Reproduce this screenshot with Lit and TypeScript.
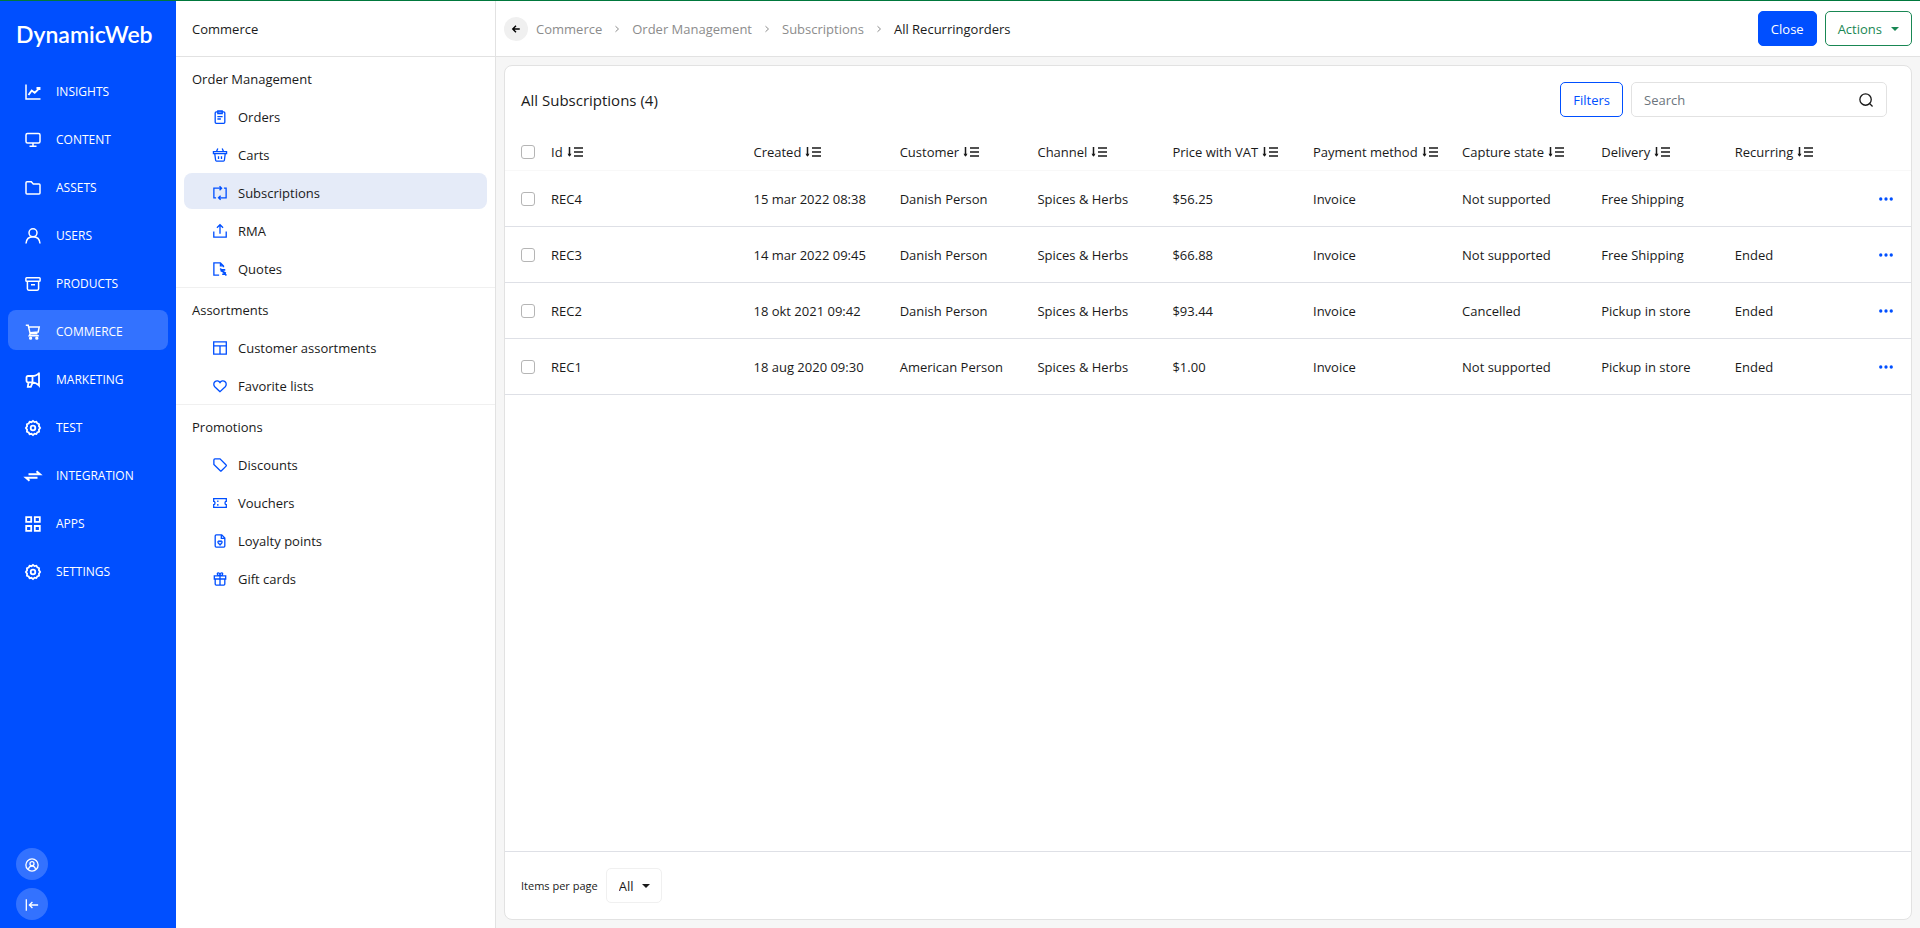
import { LitElement, html, css, svg } from "lit";
import { customElement, state } from "lit/decorators.js";
import { classMap } from "lit/directives/class-map.js";

const gear = svg`<circle cx="8" cy="8" r="2.3" stroke-width="1.8"/><path stroke-width="1.8" d="M8 .9l1.5 1.2 1.9-.4.9 1.7 1.8.8-.2 1.9L15.1 8l-1.2 1.7.2 1.9-1.8.8-.9 1.7-1.9-.4L8 15.1l-1.5-1.3-1.9.4-.9-1.7-1.8-.8.2-1.9L.9 8l1.2-1.8-.2-1.9 1.8-.8.9-1.7 1.9.4z"/>`;

const icons: Record<string, unknown> = {
  chart: svg`<path d="M1 .5V15h14.5"/><path stroke-width="1.9" d="M3.5 11l3.2-4.5 3 2.3L14.5 4M11.5 4h3v2"/>`,
  monitor: svg`<rect x="1" y="1.5" width="14" height="9.5" rx="1.5"/><path d="M8 11v3M4.5 14.2h7"/>`,
  folder: svg`<path d="M1 13V2.8c0-.6.4-1 1-1h4.3l2 2.200H14c.6 0 1 .4 1 1V13c0 .6-.4 1-1 1H2c-.6 0-1-.4-1-1z"/>`,
  user: svg`<circle cx="8" cy="4.8" r="4"/><path d="M1 15.5c.3-4 3-6.700 7-6.700s6.700 2.700 7 6.700"/>`,
  archive: svg`<rect x=".9" y="1.7" width="14.2" height="3.6" rx=".8"/><path d="M2.400 5.300v7.500c0 .8.500 1.400 1.300 1.400h8.600c.8 0 1.300-.6 1.300-1.400V5.300M6 8.700h4"/>`,
  cart: svg`<path d="M.8 1.300h2.400l2 8.500h7.300M3.700 3h10.500l-1 5-8 .7M5.200 9.800l-1 2h9.600"/><circle cx="5.6" cy="14.2" r=".9"/><circle cx="11.8" cy="14.2" r=".9"/>`,
  megaphone: svg`<path stroke-width="1.8" d="M14 .5v13c-2-2.300-4.500-3.200-7-3.200H3C1.800 10.300 1.500 9.500 1.500 8.800V5.500C1.500 4.300 2 4 3 4h4c3 0 5.500-1 7-3M7.500 4v6M3.500 10.300L2.800 14.800h3l1.700-4"/>`,
  gear,
  swap: svg`<path stroke-width="2" d="M3.500 6.300H15L11.500 3.200M12.500 9.700H1L4.500 12.800"/>`,
  grid: svg`<path stroke-width="1.8" d="M1.200 1.200h5v4.600h-5zM9.800 1.200h5v4.600h-5zM1.200 10h5v4.800h-5zM9.800 10h5v4.800h-5z"/>`,
  clipboard: svg`<rect x="2.5" y="2.2" width="11" height="13" rx="1.3"/><path d="M5.500 1h5v3h-5zM5 7.500h6M5 10.300h4"/>`,
  basket: svg`<path d="M.5 4.200h15v2.300H.5zM2 6.500l1 7.500c.1.700.5 1 1 1h8c.5 0 .9-.3 1-1l1-7.500M5.500.5L4 4M10.500.5L12 4M6.300 9.500v3M9.700 9.500v3"/>`,
  repeat: svg`<path d="M3.500 13.500H1V2.500h8.500M12.500 2.500H15v11H6.500M7.500.3L9.800 2.500 7.500 4.800M8.700 11.200L6.300 13.500l2.400 2.300"/>`,
  share: svg`<path d="M.9 8.500v6.600h14.200V8.500M8 11V1M4.500 4.300L8 .9l3.500 3.400"/>`,
  quote: svg`<path d="M7 15.100H1V1h7.500L12 4.500V6M8.500 1v3.500H12"/><path stroke-width="1.8" d="M14 9h-3.500l-1 1 4.500 2.500-.5 1.500H10.500M8.300 7.500l7 8"/>`,
  layout: svg`<path d="M.8 1h14.400v14H.8zM.8 5.500h14.400M8 5.500V15"/>`,
  heart: svg`<path d="M8 14.500L2 8.800C.4 7 .6 4.300 2.300 3 4 1.600 6.500 1.900 8 4c1.500-2.100 4-2.400 5.700-1 1.700 1.300 1.900 4 .3 5.800z"/>`,
  tag: svg`<path d="M1 2.200V7.500L8.300 14.600c.4.400.9.400 1.300 0L15 9.300c.4-.4.400-.9 0-1.300L8 1H2.200C1.500 1 1 1.500 1 2.200z"/>`,
  ticket: svg`<path d="M.8 3h14.400v3.200c-2 0-2 3.600 0 3.600V13H.8V9.800c2 0 2-3.600 0-3.600zM5.500 5v1.800M5.500 9.200V11"/>`,
  loyalty: svg`<path d="M2.500 2.200c0-.7.5-1.200 1.200-1.200H10l3.500 3.500v9.300c0 .7-.5 1.200-1.200 1.200H3.700c-.7 0-1.200-.5-1.200-1.200zM9.500 1v4h4"/><path d="M8 12.500L5.800 10c-.8-1.300.9-2.800 2.200-1.300 1.300-1.500 3 0 2.200 1.300z"/>`,
  gift: svg`<path d="M1.500 4.500h13v3.500h-13zM2.500 8v5.800c0 .7.5 1.200 1.200 1.200h8.600c.7 0 1.200-.5 1.200-1.200V8M8 4.500V15M8 4.500C5 4.500 4 1 6 1s2 3.500 2 3.500S8 1 10 1s1 3.500-2 3.500z"/>`,
  account: svg`<circle cx="8" cy="8" r="7"/><circle cx="8" cy="6.5" r="2.3"/><path d="M4 13c.3-2.500 2-3.800 4-3.800s3.700 1.300 4 3.800"/>`,
  collapse: svg`<path d="M1.500 1.500v13M15 8H5M8.500 4.500L5 8l3.500 3.500"/>`,
  back: svg`<path stroke-width="2.8" d="M15.500 8H2M8 1.500L1.500 8 8 14.500"/>`,
  chevron: svg`<path stroke-width="2" d="M5 2.500L11 8l-6 5.500"/>`,
  search: svg`<circle cx="7.5" cy="7.5" r="6.5"/><path d="M11.500 11.500l4 4"/>`,
  sort: svg`<path d="M2.500 3v9M7 4h9M7 8h9M7 12h9"/><path fill="currentColor" stroke="none" d="M.5 9.800h4l-2 3z"/>`,
  dots: svg`<g fill="currentColor" stroke="none"><circle cx="2" cy="8" r="1.9"/><circle cx="8" cy="8" r="1.9"/><circle cx="14" cy="8" r="1.9"/></g>`,
};

const icon = (name: string) =>
  html`<svg class="icon" viewBox="0 0 16 16" aria-hidden="true">${icons[name]}</svg>`;

const areas = [
  ["Insights", "chart"], ["Content", "monitor"], ["Assets", "folder"], ["Users", "user"],
  ["Products", "archive"], ["Commerce", "cart"], ["Marketing", "megaphone"], ["Test", "gear"],
  ["Integration", "swap"], ["Apps", "grid"], ["Settings", "gear"],
];

const sections = [
  { title: "Order Management", items: [["Orders", "clipboard"], ["Carts", "basket"], ["Subscriptions", "repeat"], ["RMA", "share"], ["Quotes", "quote"]] },
  { title: "Assortments", items: [["Customer assortments", "layout"], ["Favorite lists", "heart"]] },
  { title: "Promotions", items: [["Discounts", "tag"], ["Vouchers", "ticket"], ["Loyalty points", "loyalty"], ["Gift cards", "gift"]] },
];

const columns = [
  ["Id", "id"], ["Created", "created"], ["Customer", "customer"], ["Channel", "channel"],
  ["Price with VAT", "price"], ["Payment method", "payment"], ["Capture state", "capture"],
  ["Delivery", "delivery"], ["Recurring", "recurring"],
];

const orders = [
  ["REC4", "15 mar 2022 08:38", "Danish Person", "Spices & Herbs", "$56.25", "Invoice", "Not supported", "Free Shipping", ""],
  ["REC3", "14 mar 2022 09:45", "Danish Person", "Spices & Herbs", "$66.88", "Invoice", "Not supported", "Free Shipping", "Ended"],
  ["REC2", "18 okt 2021 09:42", "Danish Person", "Spices & Herbs", "$93.44", "Invoice", "Cancelled", "Pickup in store", "Ended"],
  ["REC1", "18 aug 2020 09:30", "American Person", "Spices & Herbs", "$1.00", "Invoice", "Not supported", "Pickup in store", "Ended"],
];

const base = css`
  * { box-sizing: border-box; }
  a { color: inherit; text-decoration: none; }
  button, input, select { font: inherit; color: inherit; margin: 0; }
  button { cursor: pointer; }
  .icon {
    width: 16px; height: 16px; flex: none; display: block; overflow: visible;
    fill: none; stroke: currentColor; stroke-width: 1.5;
  }
`;

@customElement("area-nav")
export class AreaNav extends LitElement {
  static styles = [base, css`
    :host { display: flex; flex-direction: column; background: #004fff; color: #fff; padding: 0 8px 8px; }
    .logo { font: 600 23px/28px Lato, sans-serif; padding: 19px 8px 22px; }
    nav { display: flex; flex-direction: column; gap: 8px; flex: 1; }
    .area {
      display: flex; align-items: center; gap: 15px; height: 40px; padding: 3px 17px 0;
      border-radius: 8px; font-size: 12px; text-transform: uppercase;
    }
    .active { background: #3372ff; }
    .tools { display: flex; flex-direction: column; gap: 8px; padding: 0 8px; }
    .tool {
      display: grid; place-items: center; width: 32px; height: 32px; padding: 2px 0 0;
      border: 0; border-radius: 50%; background: #3372ff;
    }
    .tool .icon { width: 14px; height: 14px; }
  `];

  render() {
    return html`
      <a class="logo" href="#">DynamicWeb</a>
      <nav aria-label="Areas">
        ${areas.map(([name, glyph]) => html`
          <a class=${classMap({ area: true, active: name === "Commerce" })} href="#">${icon(glyph)}${name}</a>`)}
      </nav>
      <div class="tools">
        <button class="tool" aria-label="Account">${icon("account")}</button>
        <button class="tool" aria-label="Collapse menu">${icon("collapse")}</button>
      </div>`;
  }
}

@customElement("section-nav")
export class SectionNav extends LitElement {
  static styles = [base, css`
    :host { display: block; background: #fff; border-right: 1px solid #e2e2e2; }
    .title { margin: 0; padding: 0 16px; height: 56px; line-height: 56px; font-size: 13px; font-weight: 500; border-bottom: 1px solid #e2e2e2; }
    .section { display: flex; flex-direction: column; gap: 2px; padding: 6px 8px 2px; border-bottom: 1px solid #f0f0f0; }
    .section:last-child { border-bottom: 0; }
    .heading { margin: 0; padding: 0 8px; font-size: 13px; font-weight: 400; line-height: 32px; }
    .entry { display: flex; align-items: center; gap: 11px; height: 36px; padding: 4px 29px 0; border-radius: 8px; }
    .entry .icon { width: 14px; height: 14px; color: #004fff; }
    .active { background: #e5ebf8; }
  `];

  render() {
    return html`
      <h1 class="title">Commerce</h1>
      <nav aria-label="Commerce">
        ${sections.map((s) => html`
          <div class="section">
            <h2 class="heading">${s.title}</h2>
            ${s.items.map(([name, glyph]) => html`
              <a class=${classMap({ entry: true, active: name === "Subscriptions" })} href="#">${icon(glyph)}${name}</a>`)}
          </div>`)}
      </nav>`;
  }
}

@customElement("subscription-list")
export class SubscriptionList extends LitElement {
  @state() private selected = new Set<string>();

  static styles = [base, css`
    :host {
      display: flex; flex-direction: column; background: #fff;
      border: 1px solid #e2e2e2; border-radius: 8px; overflow: hidden;
    }
    .bar { display: flex; align-items: center; gap: 8px; padding: 16px 24px 16px 16px; }
    .title { margin: 0; flex: 1; font-size: 15px; font-weight: 400; }
    .filters { height: 35px; padding: 0 12px; border: 1px solid #004fff; border-radius: 5px; background: #fff; color: #004fff; }
    .search { display: flex; align-items: center; width: 256px; height: 35px; padding: 0 13px 0 12px; border: 1px solid #e2e2e2; border-radius: 5px; }
    .search input { flex: 1; min-width: 0; border: 0; outline: 0; padding: 0; background: none; }
    .search input::placeholder { color: #6c757d; opacity: 1; }
    .search .icon { width: 14px; height: 14px; }
    .table { width: 100%; table-layout: fixed; border-collapse: separate; border-spacing: 0; text-align: left; }
    th { height: 38px; padding: 0; font-weight: 400; border-bottom: 1px solid #f8f8f8; white-space: nowrap; }
    td { height: 56px; padding: 0; border-bottom: 1px solid #dee0e6; white-space: nowrap; }
    .check { width: 46px; padding-left: 16px; }
    .id { width: 14.4%; }
    .created { width: 10.4%; }
    .customer { width: 9.8%; }
    .channel { width: 9.6%; }
    .price { width: 10%; }
    .payment { width: 10.6%; }
    .capture { width: 9.9%; }
    .delivery { width: 9.5%; }
    .menu { padding-right: 18px; width: 60px; }
    .sort { display: inline-flex; align-items: center; gap: 4px; padding: 0; border: 0; background: none; }
    .box {
      appearance: none; display: block; width: 14px; height: 14px;
      border: 1px solid #b5b5b5; border-radius: 3px; background: #fff;
    }
    .box:checked { background: #004fff; border-color: #004fff; }
    .more { display: block; margin-left: auto; padding: 0; border: 0; background: none; color: #004fff; }
    .more .icon { width: 14px; height: 14px; }
    .footer { display: flex; align-items: center; gap: 8px; margin-top: auto; padding: 16px; border-top: 1px solid #dee0e6; }
    .footer label { font-size: 11px; }
    .size { position: relative; display: flex; align-items: center; }
    .size select { appearance: none; width: 56px; height: 35px; padding: 0 12px; border: 1px solid #f0f0f0; border-radius: 5px; background: #fff; }
    .size::after {
      content: ""; position: absolute; right: 12px; pointer-events: none;
      border: 4px solid transparent; border-top-color: currentColor; border-bottom: 0;
    }
  `];

  private toggle(id: string) {
    const next = new Set(this.selected);
    next.has(id) ? next.delete(id) : next.add(id);
    this.selected = next;
  }

  private toggleAll() {
    this.selected = this.selected.size === orders.length ? new Set() : new Set(orders.map((o) => o[0]));
  }

  render() {
    return html`
      <div class="bar">
        <h2 class="title">All Subscriptions (${orders.length})</h2>
        <button class="filters">Filters</button>
        <label class="search"><input type="text" placeholder="Search" aria-label="Search">${icon("search")}</label>
      </div>
      <table class="table">
        <thead>
          <tr>
            <th class="check"><input class="box" type="checkbox" aria-label="Select all"
              .checked=${this.selected.size === orders.length} @change=${this.toggleAll}></th>
            ${columns.map(([name, key]) => html`<th class=${key}><button class="sort">${name}${icon("sort")}</button></th>`)}
            <th class="menu"></th>
          </tr>
        </thead>
        <tbody>
          ${orders.map((o) => html`
            <tr>
              <td class="check"><input class="box" type="checkbox" aria-label="Select ${o[0]}"
                .checked=${this.selected.has(o[0])} @change=${() => this.toggle(o[0])}></td>
              ${o.map((v) => html`<td>${v}</td>`)}
              <td class="menu"><button class="more" aria-label="Actions for ${o[0]}">${icon("dots")}</button></td>
            </tr>`)}
        </tbody>
      </table>
      <div class="footer">
        <label for="size">Items per page</label>
        <div class="size"><select id="size"><option>All</option><option>10</option><option>25</option></select></div>
      </div>`;
  }
}

@customElement("app-root")
export class AppRoot extends LitElement {
  static styles = [base, css`
    :host {
      display: grid; grid-template-columns: 176px 320px minmax(0, 1fr); min-height: 100vh;
      border-top: 1px solid #00783c; background: #f6f6f6; color: #1a1a1a; box-sizing: border-box;
      font: 13px/20px "Open Sans", "Noto Sans", sans-serif;
    }
    .main { display: flex; flex-direction: column; min-width: 0; }
    .top {
      display: flex; align-items: center; gap: 8px; height: 56px; padding: 0 8px;
      background: #fff; border-bottom: 1px solid #e2e2e2;
    }
    .back { display: grid; place-items: center; width: 24px; height: 24px; border-radius: 50%; background: #f0f0f0; color: #000; }
    .back .icon { width: 8px; height: 8px; }
    .crumbs { flex: 1; display: flex; align-items: center; gap: 10px; color: #8c8c8c; }
    .crumbs .icon { width: 10px; height: 8px; }
    .crumbs [aria-current] { color: #1a1a1a; }
    .button { display: flex; align-items: center; gap: 9px; height: 35px; padding: 0 12px; border: 1px solid; border-radius: 5px; }
    .primary { background: #004fff; border-color: #004fff; color: #fff; }
    .success { background: #fff; border-color: #198754; color: #198754; }
    .success::after { content: ""; border: 4px solid transparent; border-top-color: currentColor; border-bottom: 0; }
    subscription-list { flex: 1; margin: 8px; }
  `];

  render() {
    return html`
      <area-nav></area-nav>
      <section-nav></section-nav>
      <main class="main">
        <header class="top">
          <a class="back" href="#" aria-label="Back">${icon("back")}</a>
          <nav class="crumbs" aria-label="Breadcrumb">
            ${["Commerce", "Order Management", "Subscriptions"].map((c) => html`<a href="#">${c}</a>${icon("chevron")}`)}
            <span aria-current="page">All Recurringorders</span>
          </nav>
          <button class="button primary">Close</button>
          <button class="button success">Actions</button>
        </header>
        <subscription-list></subscription-list>
      </main>`;
  }
}
